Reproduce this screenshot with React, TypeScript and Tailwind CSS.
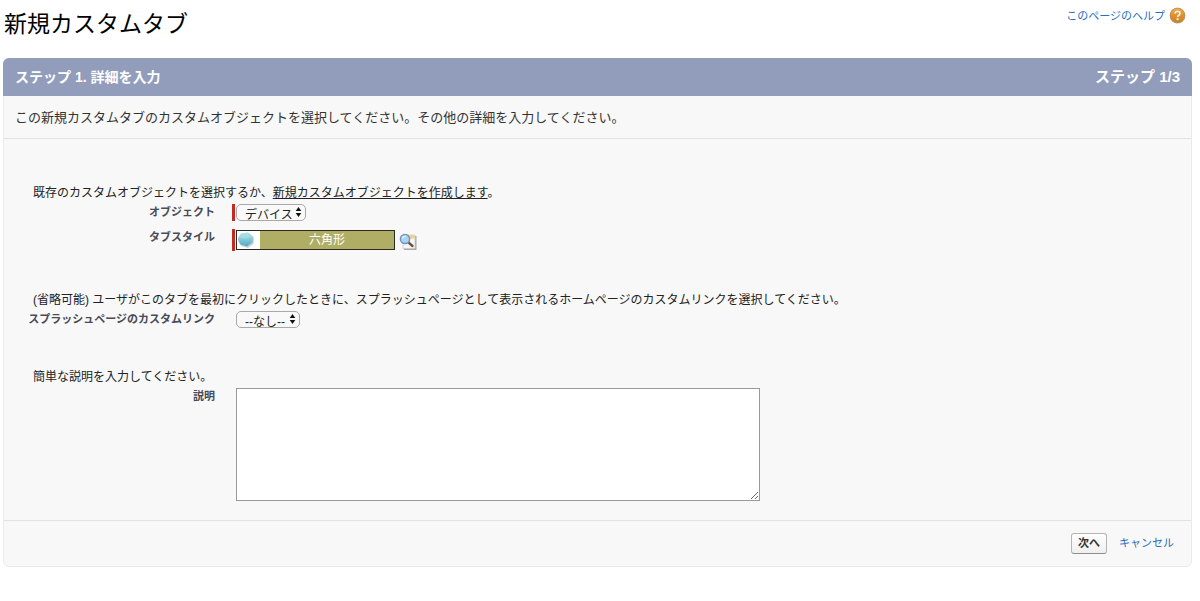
import { useState } from 'react'
import type { ReactNode } from 'react'

function HelpIcon() {
  return (
    <svg width="17" height="17" viewBox="0 0 17 17" aria-hidden="true">
      <defs>
        <linearGradient id="help" x1="0" y1="0" x2="0" y2="1">
          <stop offset="0" stopColor="#eda94a" />
          <stop offset="1" stopColor="#cf7d1c" />
        </linearGradient>
      </defs>
      <circle cx="8.5" cy="8.7" r="7.8" fill="#a99a86" />
      <circle cx="8.5" cy="8.2" r="7.2" fill="url(#help)" stroke="#c58d45" strokeWidth="0.7" />
      <path d="M6 6.6C6 3.6 11 3.7 11 6.5C11 8.3 8.6 8.2 8.6 10" fill="none" stroke="#fff3dc" strokeWidth="1.7" />
      <circle cx="8.6" cy="12.2" r="1.1" fill="#fff3dc" />
    </svg>
  )
}

function HexagonIcon() {
  return (
    <svg width="23" height="18" viewBox="0 0 23 18" aria-hidden="true">
      <defs>
        <linearGradient id="hex" x1="0" y1="0" x2="0" y2="1">
          <stop offset="0" stopColor="#b4e4e6" />
          <stop offset="1" stopColor="#53a9c6" />
        </linearGradient>
      </defs>
      <path d="M4 3L12 2L17 7L16.5 13L11 17L4 15L1 10Z" fill="#ccd5d8" />
      <path d="M4 2.5L11 1.5L16 5.5L15.5 11.5L10 15.5L3.5 13.5L0.8 8Z" fill="url(#hex)" />
      <path d="M4 2.5L11 1.5L16 5.5L9 7.5L0.8 7Z" fill="#a8dfe2" opacity="0.7" />
    </svg>
  )
}

function LookupIcon() {
  return (
    <svg width="19" height="18" viewBox="0 0 19 18" aria-hidden="true">
      <path d="M5 3H17.5V17H5Z" fill="#a9a9a9" />
      <path d="M4 2H16V15.5H4Z" fill="#f5f5f3" stroke="#c9c9c9" strokeWidth="0.8" />
      <path d="M10 2.4H15.6V5.5H10Z" fill="#f6cd7b" />
      <path d="M8.8 8.8L13.5 13" stroke="#71503a" strokeWidth="2.4" strokeLinecap="round" />
      <circle cx="6" cy="6" r="4.6" fill="#a9d3f2" stroke="#7394b5" strokeWidth="1.5" />
      <path d="M3.3 5.7C3.7 3.7 5.4 3 7 3.4" fill="none" stroke="#e2f2fd" strokeWidth="1.4" />
    </svg>
  )
}

interface PickerProps {
  id: string
  width: string
  options: string[]
}

function Picker({ id, width, options }: PickerProps) {
  return (
    <div className={`relative ${width}`}>
      <select
        id={id}
        className="block h-[17px] w-full appearance-none overflow-hidden rounded-[5px] border border-[#a9a9a9] bg-[#f9f9f9] pt-0.5 pl-2 text-xs leading-4 text-[#222]"
      >
        {options.map(o => <option key={o}>{o}</option>)}
      </select>
      <svg className="pointer-events-none absolute top-[3px] right-1" width="7" height="10" viewBox="0 0 7 10" aria-hidden="true">
        <path d="M3.5 0L6.3 4H0.7ZM3.5 10L6.3 6H0.7Z" fill="#111" />
      </svg>
    </div>
  )
}

function Field({ id, label, required, children }: { id: string; label: string; required?: boolean; children: ReactNode }) {
  return (
    <div className="flex items-start">
      <label htmlFor={id} className="w-[211px] shrink-0 text-right text-[11px] leading-4 font-bold whitespace-nowrap text-[#4a4a56]">
        {label}
      </label>
      <div className="ml-[17px] flex gap-px">
        <div className={required ? 'w-[3px] bg-[#c22b22]' : 'w-[3px]'} />
        {children}
      </div>
    </div>
  )
}

export default function App() {
  const [description, setDescription] = useState('')

  return (
    <div className="pr-2 pl-[3px] font-['Liberation_Sans','Noto_Sans_CJK_JP',sans-serif] text-xs text-[#222]">
      <header className="flex h-[58px] items-start justify-between">
        <h1 className="pt-2 pl-px text-[23px] leading-8 text-black">新規カスタムタブ</h1>
        <a href="#help" className="flex items-center gap-1 pt-[7px] pr-1.5 text-[11px] leading-4 text-[#2a6ebb]">
          このページのヘルプ
          <HelpIcon />
        </a>
      </header>

      <main className="rounded-md border border-[#eaeaea] bg-[#f8f8f8]">
        <div className="-mx-px -mt-px flex h-[38px] items-center justify-between rounded-t-md bg-[#919dbb] px-3 text-sm font-bold text-white">
          <h2>ステップ 1. 詳細を入力</h2>
          <span className="text-[15px]">ステップ 1/3</span>
        </div>
        <p className="border-b border-[#e2e2e2] px-[11px] pt-[13px] pb-[11px] text-[13px] leading-[18px] text-[#333]">
          この新規カスタムタブのカスタムオブジェクトを選択してください。その他の詳細を入力してください。
        </p>

        <form id="tab-form" className="pt-[44px] pb-[19px]" onSubmit={e => e.preventDefault()}>
          <section>
            <p className="mb-px pl-[29px] leading-5">
              既存のカスタムオブジェクトを選択するか、<a href="#new-object" className="underline">新規カスタムオブジェクトを作成します</a>。
            </p>
            <div className="flex flex-col gap-2">
              <Field id="object" label="オブジェクト" required>
                <Picker id="object" width="w-[70px]" options={['デバイス']} />
              </Field>
              <Field id="tab-style" label="タブスタイル" required>
                <div className="mt-px flex h-5 w-[159px] border border-[#2b2b22] bg-white">
                  <HexagonIcon />
                  <input
                    id="tab-style"
                    readOnly
                    value="六角形"
                    className="min-w-0 flex-1 bg-[#b0ae65] text-center text-xs text-white"
                  />
                </div>
                <button type="button" aria-label="タブスタイルの検索" className="mt-1 ml-[3px]">
                  <LookupIcon />
                </button>
              </Field>
            </div>
          </section>

          <section className="mt-[39px]">
            <p className="mb-px pl-[29px] leading-5">
              (省略可能) ユーザがこのタブを最初にクリックしたときに、スプラッシュページとして表示されるホームページのカスタムリンクを選択してください。
            </p>
            <Field id="splash" label="スプラッシュページのカスタムリンク">
              <Picker id="splash" width="w-16" options={['--なし--']} />
            </Field>
          </section>

          <section className="mt-[39px]">
            <p className="mb-px pl-[29px] leading-5">簡単な説明を入力してください。</p>
            <Field id="description" label="説明">
              <textarea
                id="description"
                value={description}
                onChange={e => setDescription(e.target.value)}
                className="h-[113px] w-[524px] resize border border-[#999] bg-white p-1"
              />
            </Field>
          </section>
        </form>

        <footer className="flex items-center justify-end gap-3 border-t border-[#e2e2e2] py-3 pr-[17px] text-[11px]">
          <button
            type="submit"
            form="tab-form"
            className="h-[21px] w-9 rounded-[3px] border border-[#b5b5b5] border-b-[#8f8f8f] bg-linear-to-b from-white to-[#efefef] font-bold text-[#333]"
          >
            次へ
          </button>
          <a href="#cancel" className="text-[#2a6ebb]">キャンセル</a>
        </footer>
      </main>
    </div>
  )
}
